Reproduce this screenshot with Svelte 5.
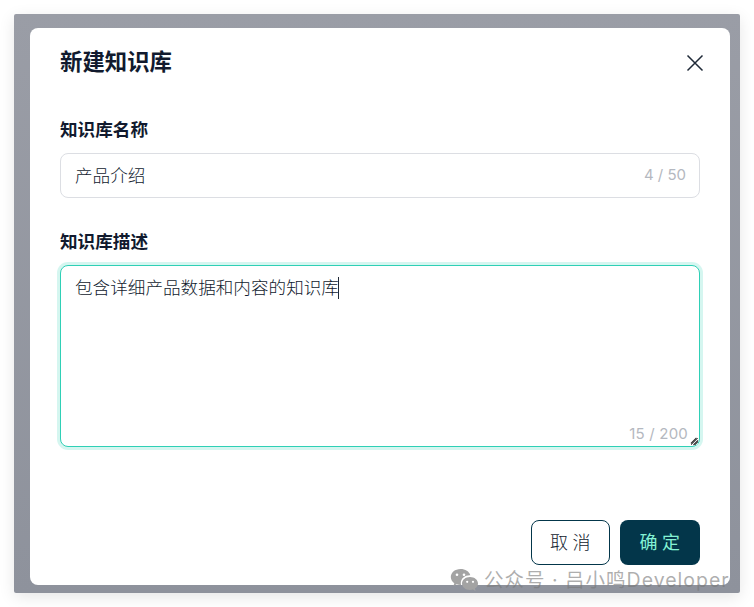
<script>
  import { onMount } from "svelte";

  let name = "产品介绍";
  let desc = "包含详细产品数据和内容的知识库";
  let box;

  onMount(() => {
    box.focus();
    box.setSelectionRange(desc.length, desc.length);
  });
</script>

<div class="page">
  <div class="backdrop">
    <div class="modal">
      <div class="head">
        <h2>新建知识库</h2>
        <button class="close" aria-label="关闭">
          <svg width="18" height="18" viewBox="0 0 18 18" fill="none" stroke="#1f2937" stroke-width="1.5">
            <path d="M1.500 1.500 16.500 16.500M16.500 1.500 1.500 16.500" />
          </svg>
        </button>
      </div>

      <label class="label" for="kb-name">知识库名称</label>
      <div class="field">
        <input id="kb-name" class="input" bind:value={name} />
        <span class="count">{name.length} / 50</span>
      </div>

      <label class="label second" for="kb-desc">知识库描述</label>
      <div class="field">
        <textarea id="kb-desc" class="area" bind:this={box} bind:value={desc}></textarea>
        <span class="caret"></span>
        <span class="count bottom">{desc.length} / 200</span>
        <svg class="grip" width="9" height="9" viewBox="0 0 9 9" fill="none" stroke="#333" stroke-width="1.300">
          <path d="M1 6.500 6.500 1M3.500 8 8 3.500" />
        </svg>
      </div>

      <div class="actions">
        <button class="btn cancel">取消</button>
        <button class="btn ok">确定</button>
      </div>
    </div>
  </div>

  <div class="mark">
    <svg width="29" height="26" viewBox="0 0 29 26" fill="#a3a3a3">
      <path d="M10.500 1C5 1 .8 4.600.8 9c0 2.500 1.400 4.700 3.500 6.200L3.400 18l3.300-1.700c1.200.4 2.500.6 3.800.6h.6a7 7 0 0 1-.3-2c0-4.300 4-7.700 9-7.700h.5C19.300 3.500 15.300 1 10.500 1z" />
      <path d="M20 9c-4.500 0-8 2.900-8 6.500s3.500 6.500 8 6.500c1 0 2-.2 2.900-.5l2.700 1.500-.7-2.400c1.900-1.200 3.100-3 3.100-5.100C28 11.900 24.500 9 20 9z" />
      <circle cx="7" cy="6.800" r="1.300" fill="#fff" />
      <circle cx="14" cy="6.800" r="1.300" fill="#fff" />
      <circle cx="17.200" cy="13.800" r="1.100" fill="#fff" />
      <circle cx="23" cy="13.800" r="1.100" fill="#fff" />
    </svg>
    <span class="mark-text">公众号 · 吕小鸣Developer</span>
  </div>
</div>

<style>
  :global(body) {
    margin: 0;
    background: #fff;
    font-family: Inter, "Noto Sans CJK SC", sans-serif;
  }
  .page {
    position: relative;
    height: 607px;
    padding: 14px;
    box-sizing: border-box;
    overflow: hidden;
  }
  .backdrop {
    height: 579px;
    padding: 14px 10px 8px 16px;
    box-sizing: border-box;
    border-radius: 2px;
    background: linear-gradient(#9a9da6, #8e929c);
    box-shadow: 0 4px 16px rgba(0, 0, 0, 0.1);
  }
  .modal {
    height: 557px;
    padding: 12px 30px 20px;
    box-sizing: border-box;
    display: flex;
    flex-direction: column;
    background: #fff;
    border-radius: 8px;
  }
  .head {
    display: flex;
    justify-content: space-between;
    align-items: center;
    height: 40px;
    margin-bottom: 34px;
  }
  h2 {
    margin: 0;
    font-size: 22.4px;
    font-weight: 700;
    color: #111a2e;
  }
  .close {
    display: flex;
    padding: 0;
    margin: 5px -4px 0 0;
    border: none;
    background: none;
  }
  .label {
    display: block;
    height: 24px;
    line-height: 24px;
    margin: 4px 0 11px;
    font-size: 17.6px;
    font-weight: 700;
    color: #111a2e;
  }
  .second {
    margin-top: 32px;
  }
  .field {
    position: relative;
    display: flex;
  }
  .input,
  .area {
    width: 100%;
    box-sizing: border-box;
    padding: 0 14px;
    border: 1px solid #dcdee3;
    border-radius: 8px;
    outline: none;
    font-family: inherit;
    font-size: 17.6px;
    font-weight: 300;
    color: #111a2e;
    background: #fff;
  }
  .input {
    height: 45px;
    padding-bottom: 3px;
  }
  .area {
    height: 182px;
    padding-top: 8px;
    line-height: 28px;
    border-color: #2fd0b6;
    box-shadow: 0 0 0 3px rgba(47, 208, 182, 0.2);
    caret-color: transparent;
  }
  .caret {
    position: absolute;
    left: 278px;
    top: 12px;
    width: 1px;
    height: 22px;
    background: #1f2937;
  }
  .grip {
    position: absolute;
    right: 1px;
    bottom: 1px;
  }
  .count {
    position: absolute;
    right: 14px;
    top: 12px;
    font-size: 15px;
    line-height: 20px;
    color: #b4b8c0;
  }
  .bottom {
    top: auto;
    right: 12px;
    bottom: 3px;
    letter-spacing: 0.2px;
  }
  .actions {
    margin-top: auto;
    display: flex;
    justify-content: flex-end;
    gap: 10px;
  }
  .btn {
    height: 45px;
    width: 80px;
    border-radius: 8px;
    font-family: inherit;
    font-size: 18px;
    letter-spacing: 4.500px;
    padding: 0 0 3px 4px;
  }
  .cancel {
    width: 79px;
    border: 1px solid #03364a;
    background: #fff;
    color: #111a2e;
    font-weight: 300;
  }
  .ok {
    border: none;
    background: #03364a;
    color: #84f2d4;
    font-weight: 400;
  }
  .mark {
    position: absolute;
    left: 450px;
    top: 564px;
    display: flex;
    align-items: center;
    gap: 5px;
    white-space: nowrap;
    font-size: 19.500px;
    letter-spacing: 1px;
    color: rgba(120, 120, 120, 0.6);
  }
  .mark-text {
    padding-bottom: 4px;
  }
</style>
